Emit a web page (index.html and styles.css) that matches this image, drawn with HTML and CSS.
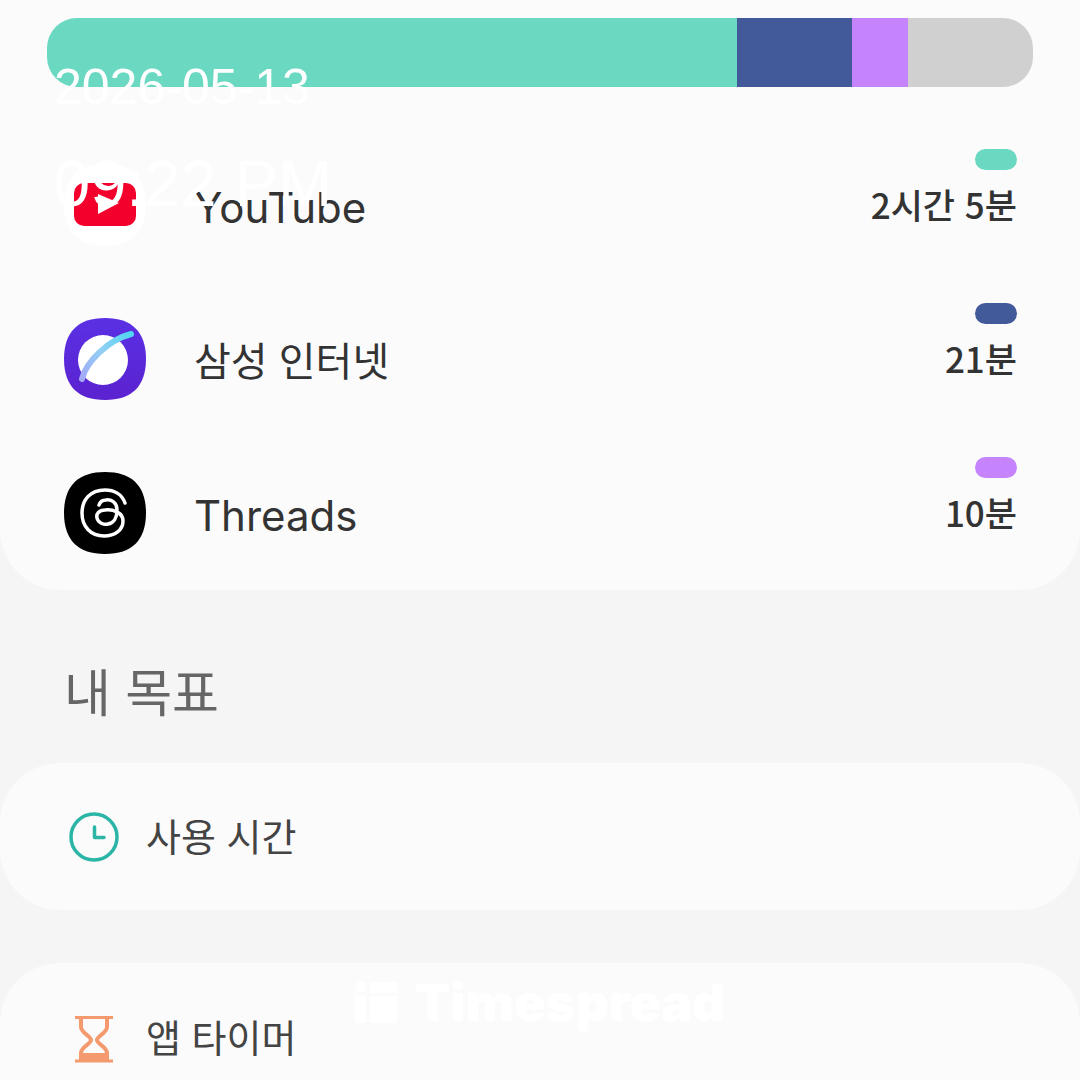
FILE: index.html
```html
<!DOCTYPE html>
<html lang="ko">
<head>
<meta charset="utf-8">
<title>Screen time</title>
<link rel="stylesheet" href="styles.css">
</head>
<body>
<main class="page">
  <section class="card usage">
    <div class="bar">
      <span class="seg seg-teal"></span>
      <span class="seg seg-blue"></span>
      <span class="seg seg-purple"></span>
      <span class="seg seg-grey"></span>
    </div>
    <div class="row">
      <span class="app-icon">
        <svg viewBox="0 0 82 82" width="82" height="82">
          <path d="M41 0C68 0 82 14 82 41S68 82 41 82 0 68 0 41 14 0 41 0Z" fill="#fff"/>
          <rect x="10" y="19" width="62" height="43" rx="10" fill="#f4002d"/>
          <path d="M34 30 L55 39 L34 50 Z" fill="#fff"/>
        </svg>
      </span>
      <span class="name name-latin">YouTube</span>
      <span class="usage-side"><i class="pill pill-teal"></i><b class="time">2시간 5분</b></span>
    </div>
    <div class="row">
      <span class="app-icon">
        <svg viewBox="0 0 82 82" width="82" height="82">
          <defs>
            <linearGradient id="si" x1="0" y1="0" x2="0" y2="1"><stop offset="0" stop-color="#5a30e4"/><stop offset="1" stop-color="#5b22d0"/></linearGradient>
            <linearGradient id="ring" gradientUnits="userSpaceOnUse" x1="17" y1="62" x2="68" y2="15"><stop offset="0" stop-color="#a3a6f6"/><stop offset=".5" stop-color="#93d0f4"/><stop offset="1" stop-color="#4fd6f2"/></linearGradient>
          </defs>
          <path d="M41 0C68 0 82 14 82 41S68 82 41 82 0 68 0 41 14 0 41 0Z" fill="url(#si)"/>
          <circle cx="39" cy="42" r="25" fill="#fff"/>
          <path d="M18 61C22 44 44 22 67 16" fill="none" stroke="url(#ring)" stroke-width="6" stroke-linecap="round"/>
        </svg>
      </span>
      <span class="name">삼성 인터넷</span>
      <span class="usage-side"><i class="pill pill-blue"></i><b class="time">21분</b></span>
    </div>
    <div class="row">
      <span class="app-icon">
        <svg viewBox="0 0 82 82" width="82" height="82">
          <path d="M41 0C68 0 82 14 82 41S68 82 41 82 0 68 0 41 14 0 41 0Z" fill="#000"/>
          <path d="M61 31C58 22 50 18 41 18 26 18 18 28 18 41 18 55 27 64 40 64 51 64 59 58 59 49 59 41 50 37 41 38 35 38 32 42 33 46 34 51 40 53 44 52 50 51 53 45 53 38 53 31 48 27 42 28 39 28 36 30 35 33" fill="none" stroke="#fff" stroke-width="3.500" stroke-linecap="round"/>
        </svg>
      </span>
      <span class="name name-latin">Threads</span>
      <span class="usage-side"><i class="pill pill-purple"></i><b class="time">10분</b></span>
    </div>
  </section>

  <h2 class="section-title">내 목표</h2>

  <section class="card goal">
    <svg class="goal-icon" viewBox="0 0 50 50" width="50" height="50"><circle cx="25" cy="25" r="23" fill="none" stroke="#2bb5a6" stroke-width="3.5"/><path d="M25.500 15V25.500H35" fill="none" stroke="#2bb5a6" stroke-width="3.5" stroke-linecap="round" stroke-linejoin="round"/></svg>
    <span class="goal-label">사용 시간</span>
  </section>

  <section class="card goal goal-timer">
    <svg class="goal-icon" viewBox="0 0 50 50" width="50" height="50"><path d="M6 4.500H44M6 48H44" stroke="#f49a6e" stroke-width="3" fill="none"/><path d="M12 5V14C12 20 22 23 22 27 22 31 12 34 12 40V47H38V40C38 34 28 31 28 27 28 23 38 20 38 14V5" fill="none" stroke="#f49a6e" stroke-width="4"/><path d="M12 47V40H38V47Z" fill="#f49a6e"/></svg>
    <span class="goal-label">앱 타이머</span>
  </section>
</main>

<div class="stamp">
  <div class="stamp-date">2026-05-13</div>
  <div class="stamp-time">09:22 PM</div>
</div>

<div class="watermark">
  <svg viewBox="0 0 42 41" width="42" height="41"><circle cx="6" cy="5" r="5.500" fill="#fff"/><rect x="0" y="13" width="11" height="28" fill="#fff"/><rect x="15" y="0" width="27" height="11" fill="#fff"/><rect x="15" y="14" width="27" height="27" fill="#fff"/></svg>
  <span class="watermark-text">Timespread</span>
</div>
</body>
</html>
```
FILE: styles.css
```css
* { box-sizing: border-box; }
html, body { margin: 0; height: 100%; }
body {
  background: #f5f5f5;
  font-family: "Noto Sans CJK KR", "Noto Sans", sans-serif;
  overflow: hidden;
  position: relative;
}
.page { display: flex; flex-direction: column; height: 1080px; overflow: hidden; }
.card { background: #fbfbfb; border-radius: 60px; flex: none; }
.usage {
  border-radius: 0 0 60px 60px;
  height: 590px;
  padding: 18px 0 0;
}
.bar {
  display: flex;
  height: 69px;
  margin: 0 47px 41px;
  border-radius: 30px;
  overflow: hidden;
  filter: blur(.7px);
}
.seg { display: block; height: 100%; }
.seg-teal { width: 690px; background: #6bd9c2; }
.seg-blue { width: 115px; background: #42599a; }
.seg-purple { width: 56px; background: #c584fb; }
.seg-grey { width: 125px; background: #d0d0d0; }
.row {
  display: flex;
  align-items: center;
  height: 154px;
  padding: 0 63px 0 64px;
}
.app-icon { width: 82px; height: 82px; flex: none; display: block; }
.app-icon svg { display: block; }
.name {
  margin-left: 48px;
  font-size: 40px;
  color: #333;
  line-height: 1;
  flex: 1;
}
.name-latin {
  font-family: Inter, "Noto Sans", sans-serif;
  font-size: 42px;
  padding-top: 6px;
}
.usage-side {
  display: flex;
  flex-direction: column;
  align-items: flex-end;
  gap: 11px;
  margin-top: -35px;
}
.pill { display: block; width: 42px; height: 21px; border-radius: 11px; }
.pill-teal { background: #6bd9c2; }
.pill-blue { background: #42599a; }
.pill-purple { background: #c584fb; }
.time { font-size: 35px; font-weight: 500; line-height: 46px; color: #333; }
.section-title {
  flex: none;
  margin: 0;
  height: 173px;
  padding: 70px 0 0 64px;
  font-size: 51px;
  line-height: 60px;
  font-weight: 400;
  color: #666;
}
.goal {
  display: flex;
  align-items: center;
  height: 147px;
  padding-left: 69px;
  gap: 27px;
}
.goal-timer { margin-top: 53px; height: 170px; padding-bottom: 20px; }
.goal-icon { flex: none; display: block; }
.goal-label { font-size: 38px; line-height: 1; color: #444; margin-bottom: 4px; }
.stamp {
  position: absolute;
  left: 54px;
  top: 59px;
  color: #fff;
  font-family: "Liberation Sans", Arial, sans-serif;
}
.stamp-date { font-size: 50px; line-height: 56px; }
.stamp-time { font-size: 65px; line-height: 72px; margin-top: 33px; }
.watermark {
  position: absolute;
  left: 355px;
  top: 982px;
  display: flex;
  align-items: center;
  gap: 18px;
  color: #fff;
}
.watermark svg { display: block; }
.watermark-text {
  font-family: Inter, "Liberation Sans", sans-serif;
  font-weight: 900;
  font-size: 51.500px;
  line-height: 41px;
}
```
